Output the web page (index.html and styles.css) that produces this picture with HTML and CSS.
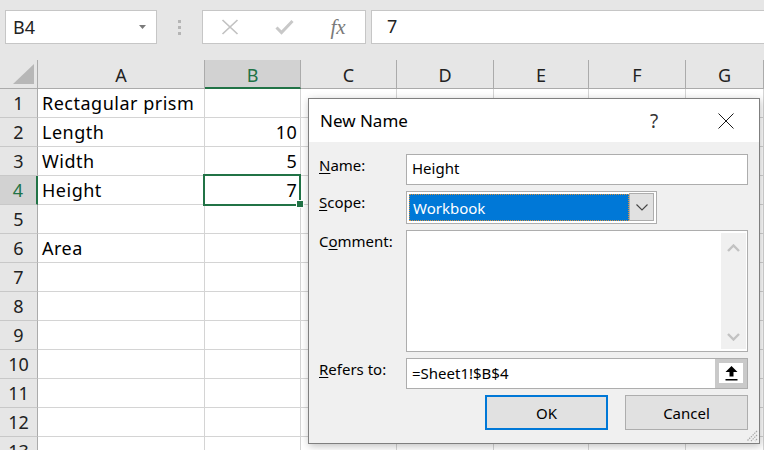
FILE: index.html
```html
<!DOCTYPE html>
<html>
<head>
<meta charset="utf-8">
<link rel="stylesheet" href="styles.css">
</head>
<body>
<div class="app">
  <div class="toolbar">
    <div class="namebox"><span>B4</span><svg width="7" height="4" viewBox="0 0 7 4"><path d="M0 0H7L3.5 4Z" fill="#7a7a7a"/></svg></div>
    <div class="vdots"><i></i><i></i><i></i></div>
    <div class="fbtns">
      <div class="slot"><svg width="18" height="16" viewBox="0 0 18 16"><path d="M1.5 1L16.5 15M16.5 1L1.5 15" stroke="#c2c2c2" stroke-width="1.7" fill="none"/></svg></div>
      <div class="slot"><svg width="19" height="16" viewBox="0 0 19 16"><path d="M1.5 8.5L6.5 13.5L17.5 2" stroke="#c8c8c8" stroke-width="3" fill="none"/></svg></div>
      <div class="slot"><span class="fx">fx</span></div>
    </div>
    <div class="finput">7</div>
  </div>

  <div class="sheet">
    <div class="corner"><svg width="21" height="20" viewBox="0 0 21 20"><path d="M21 0V20H0Z" fill="#b7b7b7"/></svg></div>
    <div class="ch">A</div><div class="ch on">B</div><div class="ch">C</div><div class="ch">D</div><div class="ch">E</div><div class="ch">F</div><div class="ch">G</div>

    <div class="rh">1</div><div class="c">Rectagular prism</div><div class="c"></div><div class="c"></div><div class="c"></div><div class="c"></div><div class="c"></div><div class="c"></div>
    <div class="rh">2</div><div class="c">Length</div><div class="c n">10</div><div class="c"></div><div class="c"></div><div class="c"></div><div class="c"></div><div class="c"></div>
    <div class="rh">3</div><div class="c">Width</div><div class="c n">5</div><div class="c"></div><div class="c"></div><div class="c"></div><div class="c"></div><div class="c"></div>
    <div class="rh on">4</div><div class="c">Height</div><div class="c n">7</div><div class="c"></div><div class="c"></div><div class="c"></div><div class="c"></div><div class="c"></div>
    <div class="rh">5</div><div class="c"></div><div class="c"></div><div class="c"></div><div class="c"></div><div class="c"></div><div class="c"></div><div class="c"></div>
    <div class="rh">6</div><div class="c">Area</div><div class="c"></div><div class="c"></div><div class="c"></div><div class="c"></div><div class="c"></div><div class="c"></div>
    <div class="rh">7</div><div class="c"></div><div class="c"></div><div class="c"></div><div class="c"></div><div class="c"></div><div class="c"></div><div class="c"></div>
    <div class="rh">8</div><div class="c"></div><div class="c"></div><div class="c"></div><div class="c"></div><div class="c"></div><div class="c"></div><div class="c"></div>
    <div class="rh">9</div><div class="c"></div><div class="c"></div><div class="c"></div><div class="c"></div><div class="c"></div><div class="c"></div><div class="c"></div>
    <div class="rh">10</div><div class="c"></div><div class="c"></div><div class="c"></div><div class="c"></div><div class="c"></div><div class="c"></div><div class="c"></div>
    <div class="rh">11</div><div class="c"></div><div class="c"></div><div class="c"></div><div class="c"></div><div class="c"></div><div class="c"></div><div class="c"></div>
    <div class="rh">12</div><div class="c"></div><div class="c"></div><div class="c"></div><div class="c"></div><div class="c"></div><div class="c"></div><div class="c"></div>
    <div class="rh">13</div><div class="c"></div><div class="c"></div><div class="c"></div><div class="c"></div><div class="c"></div><div class="c"></div><div class="c"></div>
  </div>

  <div class="sel"><i class="handle"></i></div>

  <div class="dialog">
    <div class="dtitle">
      <span class="dt-text">New Name</span>
      <span class="dt-help">?</span>
      <svg class="dt-close" width="16" height="16" viewBox="0 0 16 16"><path d="M0.5 0.5L15.5 15.5M15.5 0.5L0.5 15.5" stroke="#1a1a1a" stroke-width="1" fill="none"/></svg>
    </div>
    <div class="dbody">
      <div class="form">
        <div class="lbl"><u>N</u>ame:</div>
        <div class="inp">Height</div>
        <div class="lbl"><u>S</u>cope:</div>
        <div class="select">
          <div class="sel-val">Workbook</div>
          <div class="sel-btn"><svg width="12" height="7" viewBox="0 0 12 7"><path d="M0.5 0.5L6 6L11.5 0.5" stroke="#444" stroke-width="1.1" fill="none"/></svg></div>
        </div>
        <div class="lbl">C<u>o</u>mment:</div>
        <div class="textarea">
          <div class="vscroll">
            <svg width="13" height="8" viewBox="0 0 13 8"><path d="M1 7L6.5 1.5L12 7" stroke="#c2c2c2" stroke-width="2.4" fill="none"/></svg>
            <svg width="13" height="8" viewBox="0 0 13 8"><path d="M1 1L6.5 6.5L12 1" stroke="#c2c2c2" stroke-width="2.4" fill="none"/></svg>
          </div>
        </div>
        <div class="lbl"><u>R</u>efers to:</div>
        <div class="ref">
          <span class="ref-text">=Sheet1!$B$4</span>
          <div class="refbtn"><div class="refbtn-in"><svg width="13" height="15" viewBox="0 0 13 15"><path d="M6.5 0L12.5 6H8.5V10.5H4.5V6H0.5Z" fill="#000"/><rect x="0.5" y="13" width="12" height="1.5" fill="#000"/></svg></div></div>
        </div>
      </div>
      <div class="buttons">
        <div class="btn ok">OK</div>
        <div class="btn">Cancel</div>
      </div>
    </div>
    <svg class="grip" width="12" height="12" viewBox="0 0 12 12"><path d="M11 1L1 11M11 5L5 11M11 9L9 11" stroke="#a6a6a6" stroke-width="1.2" stroke-dasharray="1.4 1" fill="none"/></svg>
  </div>
</div>
</body>
</html>
```

FILE: styles.css
```css
* { box-sizing: border-box; }
html, body { margin: 0; padding: 0; }
body {
  width: 764px;
  height: 450px;
  overflow: hidden;
  background: #fff;
  font-family: "Noto Sans", sans-serif;
}
.app {
  position: relative;
  width: 764px;
  height: 450px;
  overflow: hidden;
}

/* formula bar */
.toolbar {
  height: 60px;
  background: #e6e6e6;
  display: flex;
  align-items: flex-start;
  padding: 10px 0 0 5px;
}
.namebox {
  width: 152px;
  height: 34px;
  flex: none;
  background: #fff;
  border: 1px solid #c6c6c6;
  display: flex;
  align-items: center;
  justify-content: space-between;
  padding: 0 10px 0 7px;
  font-size: 18px;
  color: #222;
}
.vdots {
  width: 45px;
  height: 34px;
  flex: none;
  display: flex;
  flex-direction: column;
  align-items: center;
  justify-content: center;
  gap: 3px;
}
.vdots i {
  display: block;
  width: 3px;
  height: 3px;
  background: #b5b5b5;
}
.fbtns {
  width: 164px;
  height: 34px;
  flex: none;
  background: #fff;
  border: 1px solid #c6c6c6;
  display: flex;
  align-items: center;
}
.slot {
  width: 54px;
  height: 100%;
  display: flex;
  align-items: center;
  justify-content: center;
}
.fx {
  font-family: "Liberation Serif", serif;
  font-style: italic;
  font-size: 21px;
  color: #7a7a7a;
  line-height: 1;
}
.finput {
  flex: 1;
  margin-left: 5px;
  height: 34px;
  background: #fff;
  border: 1px solid #c6c6c6;
  border-right: none;
  padding-left: 15px;
  font-size: 18px;
  line-height: 31px;
  color: #222;
}

/* sheet */
.sheet {
  display: grid;
  grid-template-columns: 38px 167px 96px 96px 97px 95px 97px 1fr;
  grid-auto-rows: 29px;
  font-family: "Noto Sans", sans-serif;
  font-size: 18px;
  color: #000;
}
.corner {
  background: #e6e6e6;
  border-right: 1px solid #ababab;
  border-bottom: 1px solid #ababab;
  display: flex;
  align-items: flex-end;
  justify-content: flex-end;
  padding: 0 3px 4px 0;
}
.ch {
  background: #e6e6e6;
  border-right: 1px solid #ababab;
  border-bottom: 1px solid #ababab;
  text-align: center;
  line-height: 28px;
  padding-top: 1px;
  color: #222;
}
.ch.on {
  background: #d2d2d2;
  color: #217346;
  border-bottom: 2px solid #217346;
}
.rh {
  background: #e6e6e6;
  border-right: 1px solid #ababab;
  border-bottom: 1px solid #c8c8c8;
  text-align: center;
  line-height: 27px;
  padding-top: 1px;
  color: #222;
}
.rh.on {
  background: #d2d2d2;
  color: #217346;
  border-right: 2px solid #217346;
}
.c {
  border-right: 1px solid #d4d4d4;
  border-bottom: 1px solid #d4d4d4;
  padding: 1px 4px 0 4px;
  line-height: 27px;
  white-space: nowrap;
  letter-spacing: 0.5px;
}
.c.n { text-align: right; padding-right: 3px; letter-spacing: 0.3px; }

.sel {
  position: absolute;
  left: 203px;
  top: 174px;
  width: 98px;
  height: 32px;
  border: 2px solid #217346;
}
.handle {
  position: absolute;
  left: 91px;
  top: 24px;
  width: 8px;
  height: 8px;
  background: #217346;
  border: 1px solid #fff;
}

/* dialog */
.dialog {
  position: absolute;
  left: 308px;
  top: 98px;
  width: 452px;
  height: 346px;
  background: #f0f0f0;
  border: 1px solid #7f7f7f;
  box-shadow: 1px 2px 8px rgba(0, 0, 0, 0.25);
  display: flex;
  flex-direction: column;
}
.dtitle {
  height: 43px;
  flex: none;
  background: #fff;
  display: flex;
  align-items: center;
  padding-left: 11px;
}
.dt-text {
  flex: 1;
  font-size: 17px;
  color: #000;
}
.dt-help {
  width: 20px;
  text-align: center;
  font-size: 19px;
  color: #333;
  margin-right: 54px;
}
.dt-close { margin-right: 25px; }
.dbody {
  flex: 1;
  padding: 12px 10px 0 10px;
  display: flex;
  flex-direction: column;
  gap: 6px;
}
.form {
  display: grid;
  grid-template-columns: 87px 342px;
  grid-template-rows: 31px 33px 122px 31px;
  row-gap: 6px;
  font-size: 15px;
  color: #000;
}
.lbl {
  line-height: 20px;
  padding-top: 1px;
}
.lbl u { text-decoration-thickness: 1px; text-underline-offset: 2px; }
.inp {
  background: #fff;
  border: 1px solid #adadad;
  padding-left: 5px;
  line-height: 26px;
}
.select {
  background: #fff;
  border: 1px solid #adadad;
  width: 251px;
  display: flex;
  padding: 1px 2px 2px 2px;
}
.sel-val {
  flex: 1;
  background: #0078d7;
  color: #fff;
  border: 1px dotted #d9903a;
  padding-left: 3px;
  line-height: 26px;
  margin-top: 1px;
}
.sel-btn {
  width: 25px;
  background: #e1e1e1;
  border: 1px solid #adadad;
  display: flex;
  align-items: center;
  justify-content: center;
}
.textarea {
  background: #fff;
  border: 1px solid #adadad;
  display: flex;
  justify-content: flex-end;
  padding: 2px 1px 2px 0;
}
.vscroll {
  width: 25px;
  background: #f0f0f0;
  display: flex;
  flex-direction: column;
  align-items: center;
  justify-content: space-between;
  padding: 11px 0 8px 0;
}
.ref {
  background: #fff;
  border: 1px solid #adadad;
  display: flex;
}
.ref-text {
  flex: 1;
  padding-left: 5px;
  line-height: 28px;
}
.refbtn {
  width: 32px;
  background: #c9c9c9;
  padding: 4px 4px 5px 4px;
}
.refbtn-in {
  height: 100%;
  background: #fff;
  display: flex;
  align-items: center;
  justify-content: center;
}
.buttons {
  display: flex;
  justify-content: flex-end;
  gap: 17px;
  padding-right: 1px;
}
.btn {
  width: 123px;
  height: 35px;
  background: #e1e1e1;
  border: 1px solid #adadad;
  display: flex;
  align-items: center;
  justify-content: center;
  font-size: 15px;
  color: #000;
}
.btn.ok { border: 2px solid #0078d7; }
.grip {
  position: absolute;
  right: 1px;
  bottom: 1px;
}
```
